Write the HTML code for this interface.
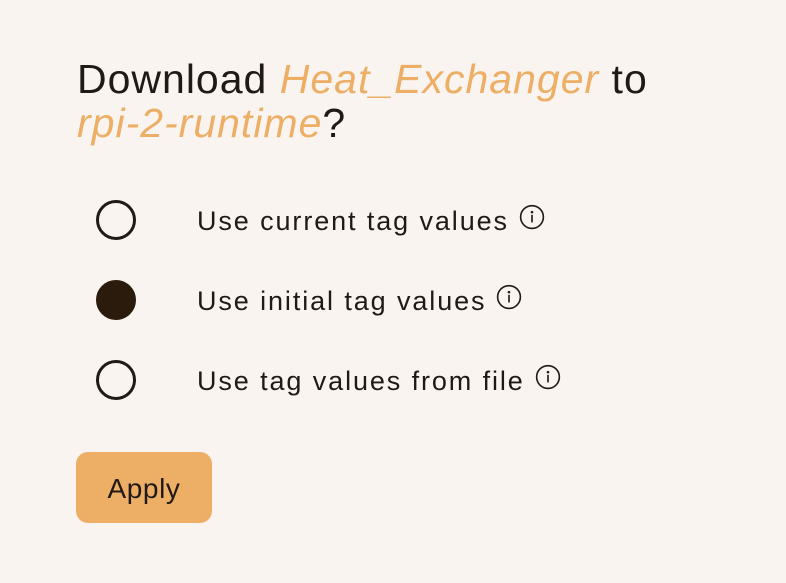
<!DOCTYPE html>
<html><head><style>
body{margin:0;width:786px;height:583px;background:#f9f4f0;font-family:"Liberation Sans",sans-serif;color:#201a16;position:relative;overflow:hidden}
h1{position:absolute;left:77px;top:57px;margin:0;font-weight:400;font-size:41px;line-height:44px;width:640px;letter-spacing:1px}
h1 i{color:#edae65}
.opt{position:absolute;left:96px;height:40px;width:600px}
.r{position:absolute;left:0;top:0;width:34px;height:34px;border:3px solid #201a16;border-radius:50%;box-sizing:content-box}
.r.f{background:#2a1b0c;border-color:#2a1b0c}
.t{position:absolute;left:101px;top:6px;font-size:27px;letter-spacing:1.9px;white-space:nowrap}
.t svg{vertical-align:top;margin-left:10px;margin-top:-2px}
.btn{position:absolute;left:76px;top:452px;width:136px;height:71px;background:#edae65;border-radius:12px;font-size:28px;line-height:73px;text-align:center;letter-spacing:0.6px}
</style></head><body>
<h1>Download <i>Heat_Exchanger</i> to <i>rpi-2-runtime</i>?</h1>
<div class="opt" style="top:200px"><div class="r"></div><div class="t">Use current tag values<svg width="26" height="26" viewBox="0 0 24 24"><circle cx="12" cy="12" r="10.5" fill="none" stroke="#201a16" stroke-width="1.5"/><circle cx="12" cy="7.5" r="1.2" fill="#201a16"/><rect x="11.25" y="10" width="1.5" height="7" fill="#201a16"/></svg></div></div>
<div class="opt" style="top:280px"><div class="r f"></div><div class="t">Use initial tag values<svg width="26" height="26" viewBox="0 0 24 24"><circle cx="12" cy="12" r="10.5" fill="none" stroke="#201a16" stroke-width="1.5"/><circle cx="12" cy="7.5" r="1.2" fill="#201a16"/><rect x="11.25" y="10" width="1.5" height="7" fill="#201a16"/></svg></div></div>
<div class="opt" style="top:360px"><div class="r"></div><div class="t">Use tag values from file<svg width="26" height="26" viewBox="0 0 24 24"><circle cx="12" cy="12" r="10.5" fill="none" stroke="#201a16" stroke-width="1.5"/><circle cx="12" cy="7.5" r="1.2" fill="#201a16"/><rect x="11.25" y="10" width="1.5" height="7" fill="#201a16"/></svg></div></div>
<div class="btn">Apply</div>
</body></html>
